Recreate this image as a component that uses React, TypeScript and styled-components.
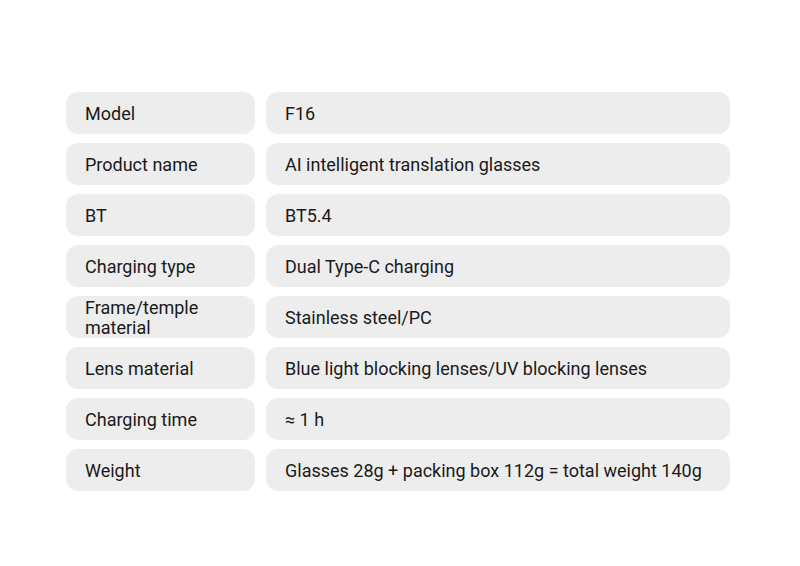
import React from "react";
import styled, { createGlobalStyle } from "styled-components";

const Global = createGlobalStyle`
  html, body { margin: 0; padding: 0; background: #ffffff; }
  body { font-family: Roboto, "Liberation Sans", Arial, sans-serif; }
`;

const Page = styled.div`
  width: 800px;
  height: 566px;
  box-sizing: border-box;
  padding-top: 92px;
  padding-left: 66px;
`;

const Table = styled.div`
  display: grid;
  grid-template-columns: 189px 464px;
  grid-auto-rows: 41.5px;
  column-gap: 11px;
  row-gap: 9.5px;
`;

const Cell = styled.div`
  background: #ededed;
  border-radius: 12px;
  display: flex;
  align-items: center;
  padding: 3px 19px 0;
  box-sizing: border-box;
  font-size: 18px;
  line-height: 20px;
  color: #1a1a1a;
`;

const rows: [string, string][] = [
  ["Model", "F16"],
  ["Product name", "AI intelligent translation glasses"],
  ["BT", "BT5.4"],
  ["Charging type", "Dual Type-C charging"],
  ["Frame/temple material", "Stainless steel/PC"],
  ["Lens material", "Blue light blocking lenses/UV blocking lenses"],
  ["Charging time", "≈ 1 h"],
  ["Weight", "Glasses 28g + packing box 112g = total weight 140g"],
];

export default function App() {
  return (
    <Page>
      <Global />
      <Table>
        {rows.map(([k, v]) => (
          <React.Fragment key={k}>
            <Cell>{k}</Cell>
            <Cell>{v}</Cell>
          </React.Fragment>
        ))}
      </Table>
    </Page>
  );
}
